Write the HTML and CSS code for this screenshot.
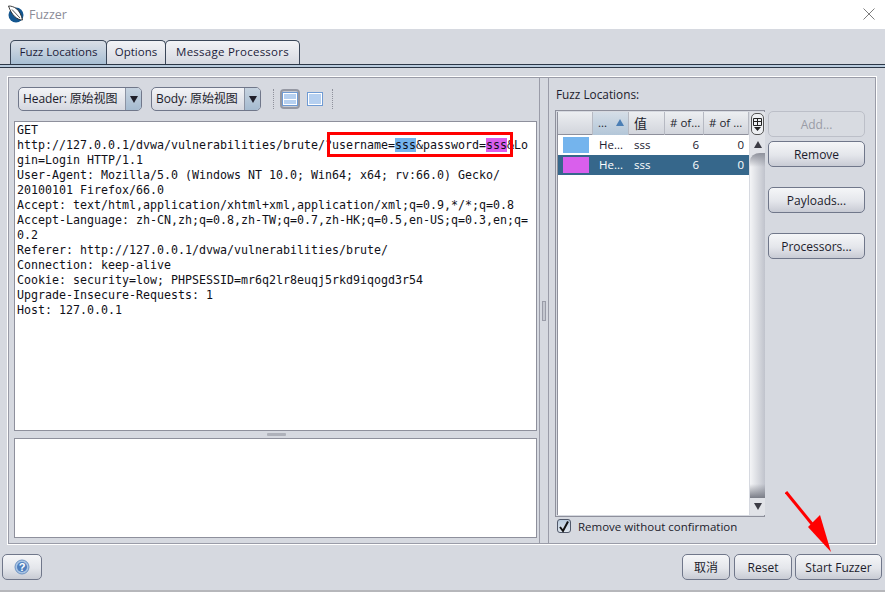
FILE: index.html
```html
<!DOCTYPE html>
<html lang="zh">
<head>
<meta charset="utf-8">
<title>Fuzzer</title>
<link rel="stylesheet" href="styles.css">
</head>
<body>
<div class="window">
  <header class="titlebar">
    <svg class="logo" width="18" height="18" viewBox="0 0 18 18"><circle cx="9" cy="10" r="7.500" fill="#14568f"/><path d="M1.500 1 C7 1 13 4 15.500 15 C10 15 4.500 10 1.500 1Z" fill="#fff" stroke="#2a2a2a" stroke-width=".9"/><path d="M5 4.500 L13 13" stroke="#444" stroke-width=".9"/></svg>
    <span class="title-text">Fuzzer</span>
    <svg class="close" width="12" height="12" viewBox="0 0 12 12"><path d="M.5.5 11.5 11.5M11.5.5.5 11.5" stroke="#7d7d7d" stroke-width="1"/></svg>
  </header>

  <nav class="tabs">
    <div class="tab tab-active tab-a">Fuzz Locations</div>
    <div class="tab tab-b">Options</div>
    <div class="tab tab-c">Message Processors</div>
  </nav>
  <div class="tab-rule"></div>

  <main class="frame">
    <section class="left">
      <div class="toolbar">
        <div class="combo combo-h"><span class="combo-label">Header: 原始视图</span><span class="combo-arrow"><i class="tri-down"></i></span></div>
        <div class="combo combo-b"><span class="combo-label">Body: 原始视图</span><span class="combo-arrow"><i class="tri-down"></i></span></div>
        <div class="grip"></div>
        <div class="view view-split"><i class="view-box"><b></b></i></div>
        <div class="view"><i class="view-box"></i></div>
        <div class="grip"></div>
      </div>
      <div class="editor"><div class="code">GET
http://127.0.0.1/dvwa/vulnerabilities/brute/?username=<span class="m-blue">sss</span>&amp;password=<span class="m-pink">sss</span>&amp;Lo
gin=Login HTTP/1.1
User-Agent: Mozilla/5.0 (Windows NT 10.0; Win64; x64; rv:66.0) Gecko/
20100101 Firefox/66.0
Accept: text/html,application/xhtml+xml,application/xml;q=0.9,*/*;q=0.8
Accept-Language: zh-CN,zh;q=0.8,zh-TW;q=0.7,zh-HK;q=0.5,en-US;q=0.3,en;q=
0.2
Referer: http://127.0.0.1/dvwa/vulnerabilities/brute/
Connection: keep-alive
Cookie: security=low; PHPSESSID=mr6q2lr8euqj5rkd9iqogd3r54
Upgrade-Insecure-Requests: 1
Host: 127.0.0.1</div></div>
      <div class="hsplit"><i></i></div>
      <div class="editor-bottom"></div>
    </section>
    <div class="vsplit"><i></i></div>
    <section class="right">
      <div class="right-label">Fuzz Locations:</div>
      <div class="right-body">
        <div class="table-wrap">
          <div class="table-main">
            <div class="thead">
              <div class="th c1"></div>
              <div class="th c2 th-sorted">...<i class="tri-up"></i></div>
              <div class="th c3 th-cjk">值</div>
              <div class="th c4"># of...</div>
              <div class="th c5"># of ...</div>
            </div>
            <div class="row">
              <div class="c1"><i class="swatch sw-blue"></i></div>
              <div class="c2 cell">He...</div><div class="c3 cell">sss</div><div class="c4 cell num">6</div><div class="c5 cell num">0</div>
            </div>
            <div class="row row-sel">
              <div class="c1"><i class="swatch sw-pink"></i></div>
              <div class="c2 cell">He...</div><div class="c3 cell">sss</div><div class="c4 cell num">6</div><div class="c5 cell num">0</div>
            </div>
          </div>
          <div class="scroll-col">
            <div class="corner"><svg width="11" height="15" viewBox="0 0 11 15"><path d="M1.500 1.500H9.500V8.500H1.500ZM1.500 4.500H9.500M5.500 1.500V8.500" fill="none" stroke="#222"/><path d="M2 10H9L5.500 14Z" fill="#222"/></svg></div>
            <div class="sb-btn"><i class="tri-up tri-dark"></i></div>
            <div class="sb-thumb"></div>
            <div class="sb-btn"><i class="tri-down tri-small"></i></div>
          </div>
        </div>
        <div class="side-btns">
          <button class="btn btn-disabled">Add...</button>
          <button class="btn">Remove</button>
          <button class="btn btn-gap">Payloads...</button>
          <button class="btn btn-gap">Processors...</button>
        </div>
      </div>
      <label class="check-row"><span class="check"><svg width="12" height="13" viewBox="0 0 12 13"><path d="M2 7 L5 11 L10 1.500" fill="none" stroke="#111" stroke-width="2"/></svg></span>Remove without confirmation</label>
    </section>
  </main>

  <footer class="footer">
    <button class="btn btn-help"><svg width="16" height="16" viewBox="0 0 16 16"><circle cx="8" cy="8" r="7" fill="#a8c4e4" stroke="#6f94c4"/><circle cx="8" cy="8" r="5" fill="#4f7fbe"/><text x="8" y="11.500" text-anchor="middle" class="help-q">?</text></svg></button>
    <span class="spacer"></span>
    <button class="btn btn-cancel">取消</button>
    <button class="btn btn-reset">Reset</button>
    <button class="btn btn-start">Start Fuzzer</button>
  </footer>
  <div class="bottom-rule"></div>

  <div class="annot-rect"></div>
  <svg class="annot-arrow" width="50" height="62" viewBox="0 0 50 62"><path d="M1 1 L27 33" stroke="#f00" stroke-width="3" fill="none"/><path d="M23 36 L35 24 L46 61Z" fill="#f00"/></svg>
</div>
</body>
</html>
```
FILE: styles.css
```css
* { box-sizing: border-box; }
html, body { margin: 0; padding: 0; }
body { width: 885px; height: 592px; overflow: hidden; background: #d6d9e0; font-family: "Open Sans", "Noto Sans CJK SC", sans-serif; font-size: 11.5px; color: #1c1c2c; }
.window { position: relative; width: 885px; height: 592px; }

.titlebar { height: 29px; background: #fff; display: flex; align-items: center; padding: 0 10px 1px 7px; }
.logo { margin-right: 4px; }
.title-text { font-size: 12.500px; color: #8c8c98; flex: 1; }

.tabs { display: flex; height: 24px; margin-top: 11px; padding-left: 10px; }
.tab { height: 24px; padding-bottom: 2px; border: 1px solid #3a4658; border-bottom: 0; border-radius: 5px 5px 0 0; background: linear-gradient(#f2f3f6, #d6d9e1); display: flex; align-items: center; justify-content: center; color: #1c1c3a; }
.tab-active { background: linear-gradient(#d9dee6, #a8bfd4); }
.tab-a { width: 97px; }
.tab-b { width: 60px; margin-left: -1px; }
.tab-c { width: 135px; margin-left: -1px; letter-spacing: .25px; }
.tab-rule { height: 4px; margin-bottom: 9px; background: #b9cbdd; border-top: 1px solid #2b3646; border-bottom: 1px solid #2b3646; }

.frame { display: flex; height: 467px; margin: 0 9px 0 8px; border: 1px solid #9a9ca8; box-shadow: 0 0 0 1px #fff; }
.left { width: 531px; padding: 9px 0 5px 5px; display: flex; flex-direction: column; border-right: 1px solid #9a9ca8; }
.toolbar { display: flex; align-items: center; height: 24px; margin-bottom: 10px; padding-left: 4px; }
.combo { height: 24px; display: flex; border: 1px solid #70778a; border-radius: 5px; background: linear-gradient(#f3f4f7, #d5d8e0); font-size: 12px; letter-spacing: -.1px; }
.combo-h { width: 124px; }
.combo-b { width: 110px; margin-left: 9px; }
.combo-label { flex: 1; padding-left: 4px; line-height: 22px; white-space: nowrap; }
.combo-arrow { width: 16px; border-left: 1px solid #8b93a3; border-radius: 0 4px 4px 0; background: linear-gradient(#c6d3e0, #a5bbd0); display: flex; align-items: center; justify-content: center; }
.tri-down { width: 0; height: 0; border-left: 4px solid transparent; border-right: 4px solid transparent; border-top: 7px solid #1f1f2a; }
.tri-up { width: 0; height: 0; border-left: 4px solid transparent; border-right: 4px solid transparent; border-bottom: 7px solid #4b7fb5; }
.tri-dark { border-bottom-color: #3b3b44; }
.tri-small { border-top-color: #3b3b44; }
.grip { width: 1px; height: 20px; margin: 0 6px 0 12px; border-left: 1px dotted #8f919c; }
.view { width: 18px; height: 16px; display: flex; align-items: center; justify-content: center; margin-right: 6px; }
.view-split { width: 20px; height: 20px; background: #c6c9d1; border: 2px solid #9598a3; border-radius: 4px; margin-right: 6px; }
.view + .grip { margin-left: 2px; }
.view-box { width: 16px; height: 14px; background: #b6d0f0; border: 1px solid #6f9bd4; box-shadow: inset 0 0 0 1px #fff; display: flex; align-items: center; flex: none; }
.view-box b { display: block; width: 100%; height: 1px; background: #fff; }

.editor { width: 523px; height: 310px; background: #fff; border: 1px solid #8e909c; padding: 1px 2px; }
.code { font-family: "DejaVu Sans Mono", monospace; font-size: 11.630px; line-height: 15px; white-space: pre; color: #101018; }
.m-blue { background: #74b4ed; }
.m-pink { background: #d95fec; }
.hsplit { height: 7px; display: flex; justify-content: center; align-items: center; }
.hsplit i { width: 19px; height: 3px; background: #aeb1ba; border-radius: 1px; }
.editor-bottom { width: 523px; height: 100px; background: #fff; border: 1px solid #8e909c; }

.vsplit { width: 9px; border-right: 1px solid #9a9ca8; display: flex; align-items: center; justify-content: center; }
.vsplit i { width: 4px; height: 20px; background: #c4c7cf; border: 1px solid #9a9ca8; }

.right { flex: 1; padding: 8px 0 0 6px; }
.right-label { height: 16px; line-height: 16px; margin-bottom: 8px; padding-left: 1px; font-size: 11.800px; }
.right-body { display: flex; }
.table-wrap { width: 210px; height: 407px; border: 1px solid #8e909c; padding: 1px; background: #d6d9e0; display: flex; }
.table-main { width: 192px; background: #fff; border-left: 1px solid #8e909c; }
.thead { display: flex; height: 23px; background: linear-gradient(#eceef1, #d2d5dc); border-bottom: 1px solid #8e909c; }
.th { height: 23px; padding-bottom: 2px; border-right: 1px solid #b6b9c2; display: flex; align-items: center; padding-left: 5px; white-space: nowrap; }
.th-sorted { background: linear-gradient(#d5dee7, #b3c6d8); justify-content: space-between; padding-right: 4px; }
.th-cjk { font-size: 13px; }
.c1 { width: 35px; flex: none; }
.c2 { width: 36px; flex: none; }
.c3 { width: 36px; flex: none; }
.c4 { width: 39px; flex: none; }
.c5 { width: 45px; flex: none; }
.row { display: flex; height: 20px; align-items: center; background: #fff; color: #202030; }
.row-sel { background: #36678b; color: #fff; }
.cell { padding-left: 6px; line-height: 20px; }
.c3.cell { padding-left: 5px; }
.num { text-align: right; padding-right: 5px; }
.swatch { display: block; width: 26px; height: 16px; margin-left: 5px; }
.sw-blue { background: #74b4ed; }
.sw-pink { background: #d95fec; }
.scroll-col { width: 15px; display: flex; flex-direction: column; background: #e1e3e8; margin-left: 1px; }
.corner { height: 22px; width: 13px; margin: 1px; display: flex; align-items: center; justify-content: center; background: #eef0f3; border: 1px solid #555; border-radius: 5px; }
.sb-btn { height: 17px; display: flex; align-items: center; justify-content: center; }
.sb-thumb { flex: 1; background: linear-gradient(#8f929c, rgba(240,241,244,0) 14px, rgba(240,241,244,0) calc(100% - 14px), #7a7d87), linear-gradient(90deg, #f4f5f7, #c0c3cc); border-radius: 10px 0 0 0 / 8px 0 0 0; }

.side-btns { display: flex; flex-direction: column; gap: 4px; margin-left: 3px; padding-top: 1px; }
.btn { width: 97px; height: 26px; padding: 0; border: 1px solid #70778a; border-radius: 5px; background: linear-gradient(#f5f6f8 0%, #e4e6eb 55%, #c8cbd4 100%); font: inherit; font-size: 12px; color: #1c1c2c; display: block; }
.btn-disabled { border-color: #bcbfc8; color: #9a9ca6; background: #d8dbe1; }
.btn-gap { margin-top: 16px; }
.check-row { display: flex; align-items: center; height: 18px; margin-left: 2px; }
.check { width: 14px; height: 14px; margin-right: 7px; border: 1px solid #50586a; border-radius: 3px; background: linear-gradient(#b9cbdd, #dfe6ee); display: flex; align-items: center; justify-content: center; }

.footer { display: flex; height: 26px; margin-top: 10px; padding: 0 3px 0 2px; gap: 3px; }
.spacer { flex: 1; }
.btn-help { width: 40px; display: flex; align-items: center; justify-content: center; }
.help-q { font: bold 11px "Liberation Sans", sans-serif; fill: #fff; }
.btn-cancel { width: 48px; margin-right: 1px; }
.btn-reset { width: 58px; }
.btn-start { width: 87px; }
.bottom-rule { height: 2px; margin-top: 10px; background: #b6b7bb; }

.annot-rect { position: absolute; left: 327px; top: 132px; width: 186px; height: 25px; border: 3px solid #f00; }
.annot-arrow { position: absolute; left: 785px; top: 491px; }
```
